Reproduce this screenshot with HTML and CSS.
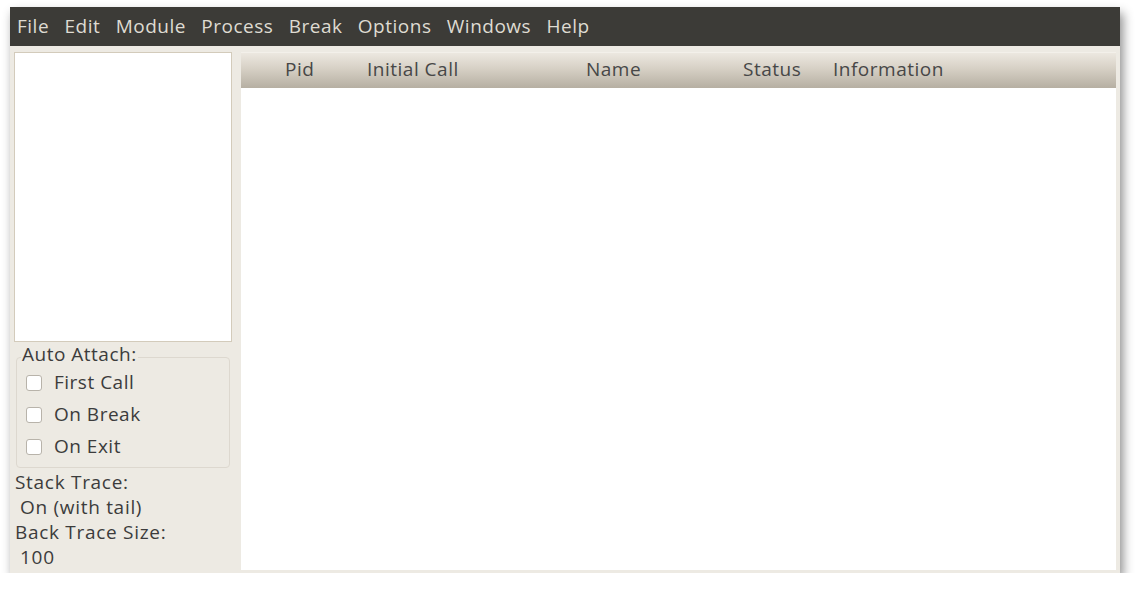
FILE: index.html
```html
<!DOCTYPE html>
<html>
<head>
<meta charset="utf-8">
<link rel="stylesheet" href="styles.css">
</head>
<body>
<div class="window">
  <div class="menubar">
    <span class="mi">File</span>
    <span class="mi">Edit</span>
    <span class="mi">Module</span>
    <span class="mi">Process</span>
    <span class="mi">Break</span>
    <span class="mi">Options</span>
    <span class="mi">Windows</span>
    <span class="mi">Help</span>
  </div>
  <div class="main">
    <div class="left">
      <div class="listbox"></div>
      <div class="group">
        <div class="group-label">Auto Attach:</div>
        <div class="check"><span class="box"></span><span>First Call</span></div>
        <div class="check"><span class="box"></span><span>On Break</span></div>
        <div class="check"><span class="box"></span><span>On Exit</span></div>
      </div>
      <div class="info">
        <div class="line">Stack Trace:</div>
        <div class="line indent">On (with tail)</div>
        <div class="line">Back Trace Size:</div>
        <div class="line indent">100</div>
      </div>
    </div>
    <div class="right">
      <div class="header">
        <span class="col">Pid</span>
        <span class="col">Initial Call</span>
        <span class="col">Name</span>
        <span class="col">Status</span>
        <span class="col">Information</span>
      </div>
      <div class="body"></div>
    </div>
  </div>
</div>
</body>
</html>
```
FILE: styles.css
```css
* { box-sizing: border-box; }
html, body { margin: 0; padding: 0; background: #ffffff; }
body {
  font-family: "Open Sans", "DejaVu Sans", sans-serif;
  font-size: 19px;
  letter-spacing: 0.5px;
}
.window {
  margin: 7px 0 0 10px;
  width: 1110px;
  height: 566px;
  background: #edeae3;
  box-shadow: 3px 6px 10px rgba(0,0,0,0.45);
  display: flex;
  flex-direction: column;
}
.menubar {
  height: 39px;
  background: #3c3b37;
  display: flex;
  align-items: center;
  padding-left: 7px;
  padding-bottom: 2px;
  color: #dfdbd2;
  gap: 15.4px;
}
.main {
  flex: 1;
  display: flex;
  padding: 6px 4px 3px 4px;
  gap: 9px;
}
.left {
  width: 218px;
  display: flex;
  flex-direction: column;
  color: #3c3c3c;
}
.listbox {
  height: 290px;
  background: #fff;
  border: 1px solid #d3cbbb;
}
.group {
  position: relative;
  margin: 15px 2px 0 2px;
  height: 111px;
  border: 1px solid #ddd8cf;
  border-radius: 4px;
  padding-top: 8px;
}
.group-label {
  position: absolute;
  top: -15px;
  left: 4px;
  background: #edeae3;
  padding: 0 1px;
  line-height: 22px;
}
.check {
  display: flex;
  align-items: center;
  height: 32px;
  padding-left: 9px;
}
.box {
  width: 16px;
  height: 16px;
  border: 1px solid #b8b3aa;
  border-radius: 3px;
  background: #fff;
  margin-right: 12px;
  margin-top: 1px;
}
.info { margin-top: 2px; }
.line { line-height: 25px; padding-left: 1px; letter-spacing: 0.7px; }
.indent { padding-left: 6px; }
.right {
  flex: 1;
  display: flex;
  flex-direction: column;
}
.header {
  height: 36px;
  background: linear-gradient(to bottom, #ece8e0 0%, #d9d3c8 40%, #b6afa2 100%);
  border-top: 1px solid #f3f0ea;
  color: #474747;
  display: grid;
  grid-template-columns: 82px 219px 157px 90px auto;
  padding-left: 44px;
  line-height: 32px;
}
.body { flex: 1; background: #fff; }
```
